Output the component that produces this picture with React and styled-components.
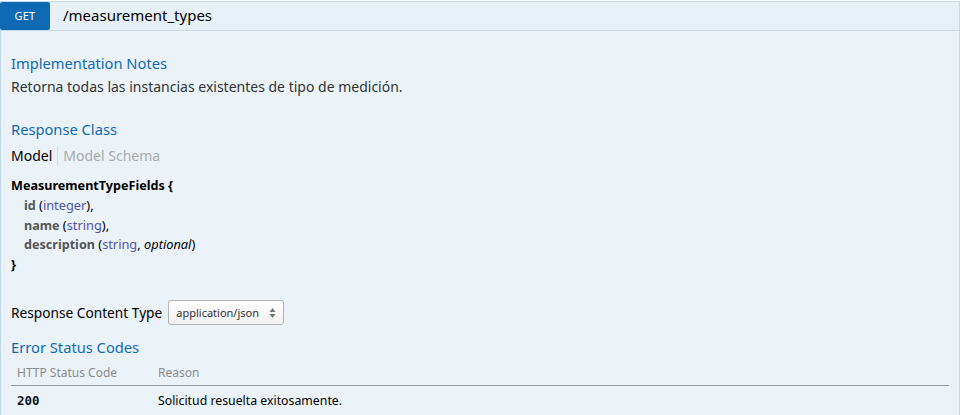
import React from "react";
import styled, { createGlobalStyle } from "styled-components";

const Global = createGlobalStyle`
  html, body { margin: 0; padding: 0; background: #ffffff; overflow: hidden; }
  body { font-family: "Noto Sans", "Open Sans", sans-serif; }
  * { box-sizing: border-box; }
`;

const Operation = styled.div`
  width: 960px;
  padding-top: 1px;
`;

const Heading = styled.div`
  display: flex;
  align-items: center;
  height: 30px;
  background: #e7f0f7;
  border: 1px solid #c3d9ec;
  border-left: none;
`;

const Method = styled.span`
  display: flex;
  align-items: center;
  justify-content: center;
  width: 50px;
  height: 28px;
  margin-top: -1px;
  background: #0f6ab4;
  color: #ffffff;
  border-radius: 2px;
  font-size: 11px;
  text-transform: uppercase;
  letter-spacing: 0.2px;
`;

const Path = styled.span`
  margin-left: 13px;
  font-size: 15px;
  color: #000;
  line-height: 20px;
  margin-top: -2px;
`;

const Content = styled.div`
  display: flow-root;
  background: #ebf3f9;
  border: 1px solid #c3d9ec;
  border-top: none;
  border-bottom: none;
  padding: 0 10px;
  height: 384px;
`;

const SectionTitle = styled.h4`
  margin: ${(p) => p.$mt}px 0 0 0;
  font-size: 14.7px;
  line-height: 20px;
  font-weight: normal;
  color: #0f6ab4;
`;

const Notes = styled.p`
  margin: 5px 0 0 0;
  font-size: 14px;
  line-height: 18px;
  color: #333;
`;

const Tabs = styled.div`
  display: flex;
  align-items: center;
  margin-top: 7px;
  font-size: 14px;
  line-height: 18px;
`;

const Tab = styled.span`
  color: ${(p) => (p.$active ? "#000" : "#aaa")};
  padding: 0 5px 0 0;
  & + & {
    border-left: 1px solid #ddd;
    padding: 0 0 0 5px;
    line-height: 20px;
  }
`;

const Signature = styled.div`
  margin-top: 10px;
  font-size: 12.8px;
  line-height: 19.75px;
  color: #000;
`;

const Line = styled.div`
  padding-left: ${(p) => (p.$indent ? 13 : 0)}px;
`;

const Strong = styled.span`
  font-weight: bold;
  font-size: 12.6px;
  color: ${(p) => (p.$dim ? "#555" : "#000")};
`;

const PropType = styled.span`
  color: #5555aa;
`;

const Opt = styled.span`
  font-style: italic;
`;

const ContentTypeRow = styled.div`
  display: flex;
  align-items: center;
  margin-top: 25px;
  height: 26px;
  font-size: 13.7px;
  color: #000;
`;

const SelectBox = styled.div`
  display: flex;
  align-items: center;
  justify-content: space-between;
  margin-left: 6px;
  width: 116px;
  height: 25px;
  padding: 0 7px 0 7px;
  border: 1px solid #b3b3b3;
  border-radius: 3px;
  background: linear-gradient(#ffffff, #f1f1f1);
  font-size: 11px;
  color: #333;
`;

const Arrows = styled.svg`
  width: 7px;
  height: 12px;
`;

const Table = styled.table`
  width: 100%;
  margin-top: 7px;
  border-collapse: collapse;
`;

const Th = styled.th`
  text-align: left;
  font-weight: normal;
  font-size: 12px;
  line-height: 18px;
  color: #8a8a8a;
  padding: 0 6px 3px 6px;
  border-bottom: 1px solid #999;
  width: ${(p) => p.$w || "auto"};
`;

const Td = styled.td`
  font-size: 12.3px;
  line-height: 18px;
  color: #000;
  padding: 6px 6px 0 6px;
`;

const Code = styled.span`
  font-family: "DejaVu Sans Mono", "Liberation Mono", monospace;
  font-weight: 600;
  font-size: 12.5px;
  color: #111;
`;

export default function App() {
  return (
    <Operation>
      <Global />
      <Heading>
        <Method>get</Method>
        <Path>/measurement_types</Path>
      </Heading>
      <Content>
        <SectionTitle $mt={22}>Implementation Notes</SectionTitle>
        <Notes>Retorna todas las instancias existentes de tipo de medición.</Notes>
        <SectionTitle $mt={23}>Response Class</SectionTitle>
        <Tabs>
          <Tab $active>Model</Tab>
          <Tab>Model Schema</Tab>
        </Tabs>
        <Signature>
          <Line>
            <Strong>MeasurementTypeFields {"{"}</Strong>
          </Line>
          <Line $indent>
            <Strong $dim>id</Strong> (<PropType>integer</PropType>),
          </Line>
          <Line $indent>
            <Strong $dim>name</Strong> (<PropType>string</PropType>),
          </Line>
          <Line $indent>
            <Strong $dim>description</Strong> (<PropType>string</PropType>, <Opt>optional</Opt>)
          </Line>
          <Line>
            <Strong>{"}"}</Strong>
          </Line>
        </Signature>
        <ContentTypeRow>
          Response Content Type
          <SelectBox>
            <span>application/json</span>
            <Arrows viewBox="0 0 7 12">
              <path d="M3.5 1 L6.5 5 L0.5 5 Z" fill="#777" />
              <path d="M3.5 11 L6.5 7 L0.5 7 Z" fill="#777" />
            </Arrows>
          </SelectBox>
        </ContentTypeRow>
        <SectionTitle $mt={11}>Error Status Codes</SectionTitle>
        <Table>
          <thead>
            <tr>
              <Th $w="141px">HTTP Status Code</Th>
              <Th>Reason</Th>
            </tr>
          </thead>
          <tbody>
            <tr>
              <Td>
                <Code>200</Code>
              </Td>
              <Td>Solicitud resuelta exitosamente.</Td>
            </tr>
          </tbody>
        </Table>
      </Content>
    </Operation>
  );
}
